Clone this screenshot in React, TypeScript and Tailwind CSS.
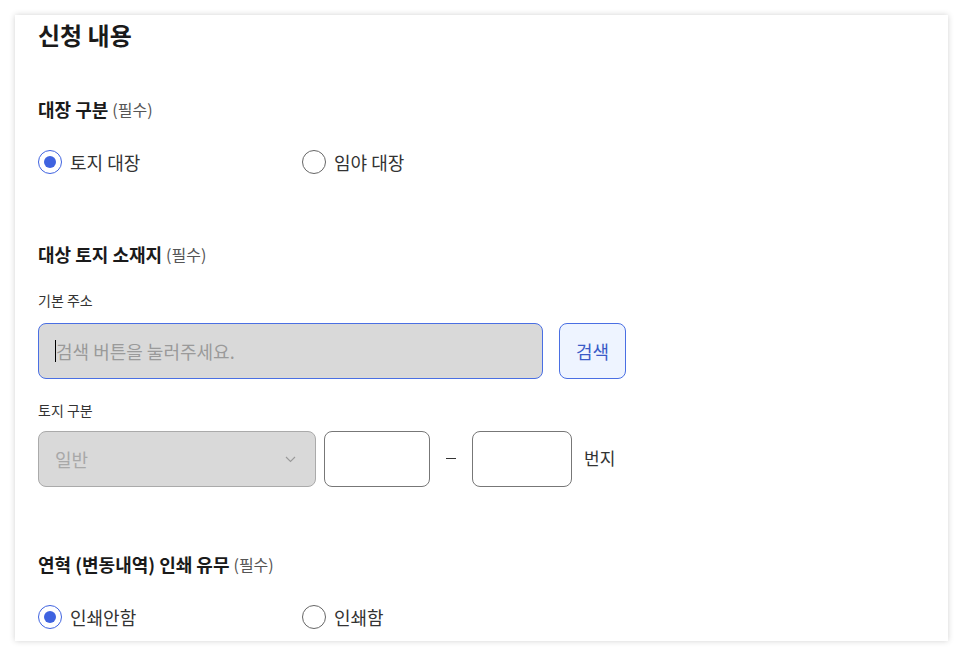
import React from "react";

const font = { fontFamily: '"Noto Sans CJK KR", "Noto Sans", sans-serif' };

function Radio({ checked, label }: { checked: boolean; label: string }) {
  return (
    <div className="flex items-center w-[264px] h-[24px]">
      {checked ? (
        <span className="w-[24px] h-[24px] rounded-full border-[1.5px] border-[#3f63e0] flex items-center justify-center">
          <span className="w-[12px] h-[12px] rounded-full bg-[#3f63e0]" />
        </span>
      ) : (
        <span className="w-[24px] h-[24px] rounded-full border border-[#666]" />
      )}
      <span className="ml-[8px] text-[18px] leading-[24px] text-[#333]">{label}</span>
    </div>
  );
}

function SectionLabel({ title, className }: { title: string; className: string }) {
  return (
    <div className={"h-[24px] flex items-center " + className}>
      <span className="text-[18px] font-bold text-[#1a1a1a] leading-[24px]">{title}</span>
      <span className="ml-[4px] text-[16px] text-[#555] leading-[24px]">(필수)</span>
    </div>
  );
}

export default function App() {
  return (
    <div className="min-h-[656px] bg-white pt-[15px] pl-[15px]" style={font}>
      <div className="w-[933px] h-[626px] bg-white shadow-[0_0_6px_rgba(0,0,0,0.18)] pl-[23px] pt-[3px] flex flex-col">
        <h1 className="text-[24px] font-bold leading-[34px] text-[#1a1a1a]">신청 내용</h1>

        <SectionLabel title="대장 구분" className="mt-[45px]" />
        <div className="flex mt-[29px]">
          <Radio checked label="토지 대장" />
          <Radio checked={false} label="임야 대장" />
        </div>

        <SectionLabel title="대상 토지 소재지" className="mt-[68px]" />
        <div className="mt-[24px] h-[20px] text-[14px] leading-[20px] text-[#333]">기본 주소</div>
        <div className="mt-[13px] flex">
          <div className="w-[505px] h-[56px] rounded-[8px] border border-[#4a6fe3] bg-[#d9d9d9] flex items-center pl-[16px]">
            <span className="w-[1px] h-[22px] bg-black" />
            <span className="text-[18px] text-[#9a9a9a]">검색 버튼을 눌러주세요.</span>
          </div>
          <button className="ml-[16px] w-[67px] h-[56px] rounded-[8px] border border-[#4a6fe3] bg-[#eef4ff] text-[18px] text-[#3a5bc7]">
            검색
          </button>
        </div>

        <div className="mt-[21px] h-[20px] text-[14px] leading-[20px] text-[#333]">토지 구분</div>
        <div className="mt-[11px] flex items-center">
          <div className="w-[278px] h-[56px] rounded-[8px] border border-[#aaaaaa] bg-[#d9d9d9] flex items-center justify-between pl-[16px] pr-[19px]">
            <span className="text-[18px] text-[#a8a8a8]">일반</span>
            <svg width="11" height="7" viewBox="0 0 11 7" fill="none">
              <path d="M1 1l4.5 4.5L10 1" stroke="#9a9a9a" strokeWidth="1.1" />
            </svg>
          </div>
          <div className="ml-[8px] w-[106px] h-[56px] rounded-[8px] border border-[#777] bg-white" />
          <span className="mx-[16px] w-[10px] h-[1px] bg-[#333] -translate-y-[1px]" />
          <div className="w-[100px] h-[56px] rounded-[8px] border border-[#777] bg-white" />
          <span className="ml-[12px] text-[17px] text-[#333] -translate-y-[1px]">번지</span>
        </div>

        <SectionLabel title="연혁 (변동내역) 인쇄 유무" className="mt-[65px]" />
        <div className="flex mt-[29px]">
          <Radio checked label="인쇄안함" />
          <Radio checked={false} label="인쇄함" />
        </div>
      </div>
    </div>
  );
}
